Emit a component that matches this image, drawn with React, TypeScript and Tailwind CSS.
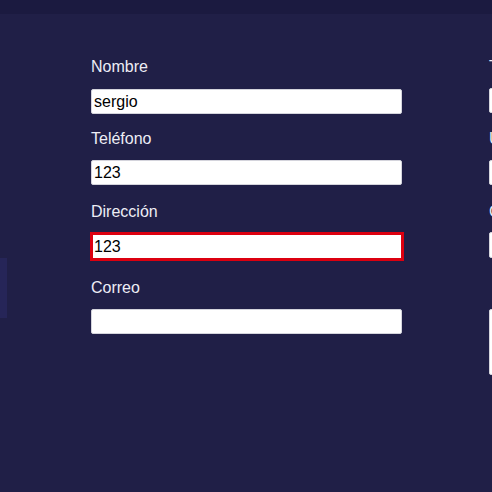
import React from "react";

const inputBase =
  "block w-[311px] h-[25px] bg-white rounded-[2px] border border-[#d4d4dc] px-[2px] text-[16px] leading-[23px] text-black outline-none font-['Liberation_Sans',Arial,sans-serif]";

function Label({ children, className = "" }: { children: React.ReactNode; className?: string }) {
  return (
    <label className={`block h-[24px] text-[16px] leading-[24px] text-[#ededf5] whitespace-nowrap ${className}`}>
      {children}
    </label>
  );
}

export default function App() {
  return (
    <div className="w-[492px] h-[492px] overflow-hidden bg-[#201f47] font-['Liberation_Sans',Arial,sans-serif]">
      <div className="h-[14px] bg-[#1b1a40]" />
      <div className="flex">
        <div className="w-[7px] h-[60px] mt-[244px] shrink-0 bg-[#262558]" />
        <div className="ml-[84px] pt-[41px] flex gap-[87px] shrink-0">
          <div className="w-[311px] shrink-0 flex flex-col">
            <Label>Nombre</Label>
            <input className={`${inputBase} mt-[10px]`} defaultValue="sergio" />
            <Label className="mt-[13px]">Teléfono</Label>
            <input className={`${inputBase} mt-[9px]`} defaultValue="123" />
            <Label className="mt-[15px]">Dirección</Label>
            <input
              className="block w-[314px] h-[29px] -ml-[1px] mt-[8px] bg-white border-[3px] border-[#dc0010] px-[1px] text-[16px] leading-[23px] text-black outline-none font-['Liberation_Sans',Arial,sans-serif]"
              defaultValue="123"
            />
            <Label className="mt-[15px]">Correo</Label>
            <input className={`${inputBase} mt-[9px]`} defaultValue="" />
          </div>
          <div className="w-[311px] shrink-0 flex flex-col">
            <Label>Tipo</Label>
            <input className={`${inputBase} mt-[9px]`} defaultValue="" />
            <Label className="mt-[14px]">Usuario</Label>
            <input className={`${inputBase} mt-[9px]`} defaultValue="" />
            <Label className="mt-[15px]">Ciudad</Label>
            <input className={`${inputBase} mt-[8px] h-[26px]`} defaultValue="" />
            <div className="h-[24px] mt-[18px]" />
            <textarea
              className="block w-[311px] h-[66px] mt-[9px] bg-white rounded-[2px] border border-[#d4d4dc] resize-none outline-none"
              defaultValue=""
            />
          </div>
        </div>
      </div>
    </div>
  );
}
